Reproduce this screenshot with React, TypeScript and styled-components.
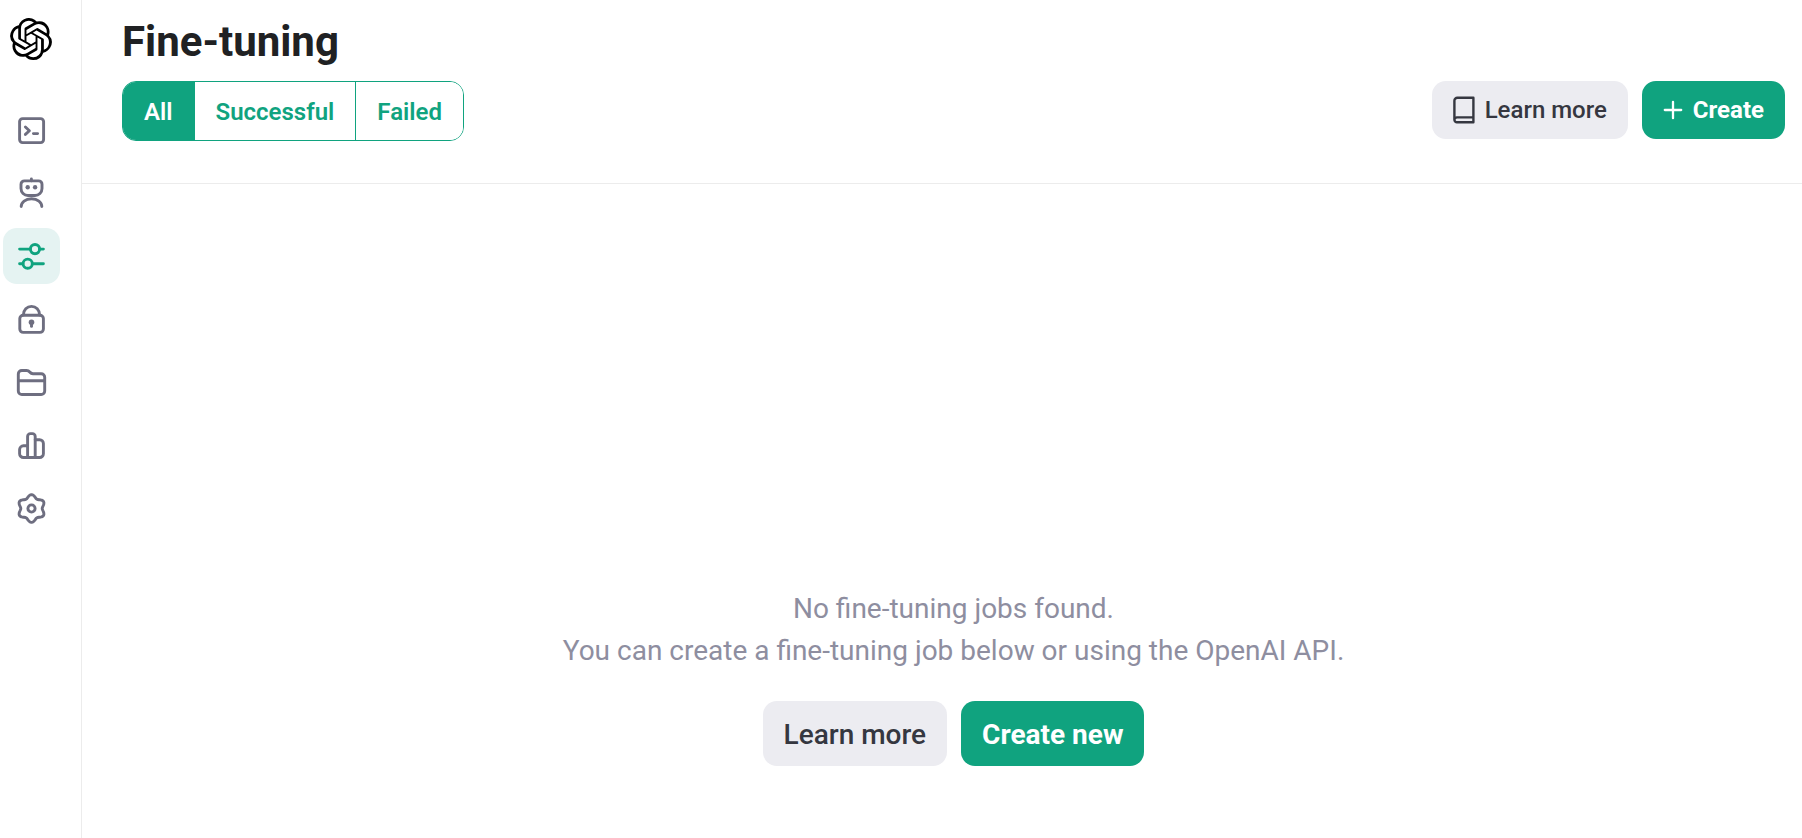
import React, { useState } from "react";
import styled, { createGlobalStyle, css } from "styled-components";
import { SiOpenai } from "react-icons/si";

const color = {
  green: "#10a37f",
  greenSoft: "#e5f3f2",
  grey: "#ececf1",
  ink: "#353740",
  title: "#202123",
  muted: "#8e8ea0",
  icon: "#6e6e80",
  line: "#ececec",
};

const GlobalStyle = createGlobalStyle`
  *, *::before, *::after { box-sizing: border-box; }
  body {
    margin: 0;
    background: #fff;
    color: ${color.ink};
    font-family: Roboto, "Liberation Sans", sans-serif;
  }
  button { font-family: inherit; cursor: pointer; }
`;

const Page = styled.div`
  display: flex;
  min-height: 100vh;
`;

const Sidebar = styled.aside`
  flex: none;
  display: flex;
  flex-direction: column;
  gap: 42px;
  width: 82px;
  padding: 18px 0 18px 3px;
  border-right: 1px solid ${color.line};
`;

const Logo = styled.a`
  display: flex;
  justify-content: center;
  width: 56px;
  color: #000;
`;

const Nav = styled.nav`
  display: flex;
  flex-direction: column;
  gap: 7px;
`;

const NavLink = styled.a<{ $active: boolean }>`
  display: flex;
  align-items: center;
  justify-content: center;
  width: 57px;
  height: 56px;
  border-radius: 14px;
  color: ${(p) => (p.$active ? color.green : color.icon)};
  background: ${(p) => (p.$active ? color.greenSoft : "transparent")};
`;

const Main = styled.main`
  flex: 1;
  min-width: 0;
`;

const Header = styled.header`
  display: flex;
  flex-direction: column;
  gap: 15px;
  padding: 18px 17px 42px 40px;
  border-bottom: 1px solid ${color.line};
`;

const Title = styled.h1`
  margin: 0;
  font-size: 42px;
  line-height: 48px;
  font-weight: 700;
  color: ${color.title};
`;

const Toolbar = styled.div`
  display: flex;
  flex-wrap: wrap;
  align-items: flex-start;
  justify-content: space-between;
  gap: 14px;
`;

const Segments = styled.div`
  display: flex;
  height: 60px;
  border: 1px solid ${color.green};
  border-radius: 14px;
  overflow: hidden;
`;

const Segment = styled.button<{ $active: boolean }>`
  padding: 2px 21px 0;
  border: 0;
  font-size: 24px;
  font-weight: 600;
  color: ${(p) => (p.$active ? "#fff" : color.green)};
  background: ${(p) => (p.$active ? color.green : "#fff")};

  & + & {
    border-left: 1px solid ${color.green};
  }
`;

const Actions = styled.div`
  display: flex;
  gap: 14px;
`;

const Button = styled.button<{ $primary?: boolean; $large?: boolean }>`
  display: flex;
  align-items: center;
  gap: 10px;
  border: 0;
  border-radius: 14px;
  ${(p) =>
    p.$large
      ? css`
          height: 65px;
          padding: 2px 21px 0;
          font-size: 28px;
        `
      : css`
          height: 58px;
          padding: 0 21px;
          font-size: 24px;
        `}
  font-weight: ${(p) => (p.$primary ? 700 : 500)};
  color: ${(p) => (p.$primary ? "#fff" : color.ink)};
  background: ${(p) => (p.$primary ? color.green : color.grey)};
`;

const Empty = styled.section`
  display: flex;
  flex-direction: column;
  align-items: center;
  gap: 29px;
  padding: 404px 17px 72px 40px;
`;

const Message = styled.p`
  margin: 0;
  font-size: 28px;
  line-height: 42px;
  text-align: center;
  color: ${color.muted};
`;

const NavIcon = ({ children }: { children: React.ReactNode }) => (
  <svg
    width="31"
    height="32"
    viewBox="0 0 31 32"
    fill="none"
    stroke="currentColor"
    strokeWidth="2.9"
    strokeLinecap="round"
    strokeLinejoin="round"
    aria-hidden="true"
  >
    {children}
  </svg>
);

const Playground = () => (
  <NavIcon>
    <rect x="3.6" y="4.6" width="24" height="24" rx="3" />
    <path d="M9.4 13l4 3.7-4 3.7M17.4 19.6h4.2" />
  </NavIcon>
);

const Assistant = () => (
  <NavIcon>
    <path d="M15.4 2v2M8.4 3.9h14.2a3.4 3.4 0 0 1 3.4 3.4v4.2a7 7 0 0 1-7 7h-7a7 7 0 0 1-7-7V7.3a3.4 3.4 0 0 1 3.4-3.4z" />
    <path d="M5.2 29.6c0-4.4 4.2-7.8 10.3-7.8s10.3 3.4 10.3 7.8" />
    <g fill="currentColor" stroke="none">
      <circle cx="11.7" cy="10.2" r="2.2" />
      <circle cx="19.1" cy="10.2" r="2.2" />
    </g>
  </NavIcon>
);

const Sliders = () => (
  <NavIcon>
    <path d="M3.6 9.1h10.6M23.6 9.1h3.8M3.6 23.7h3.2M16.4 23.7h11" />
    <circle cx="19" cy="9.1" r="4.6" />
    <circle cx="11.7" cy="23.7" r="4.6" />
  </NavIcon>
);

const Lock = () => (
  <NavIcon>
    <rect x="3.8" y="12.2" width="23.6" height="17.2" rx="3.4" />
    <path d="M7.4 12c0-5 3.6-8.6 8.1-8.6s8.1 3.6 8.1 8.6" />
    <circle cx="15.5" cy="19.3" r="2.8" fill="currentColor" stroke="none" />
    <path d="M15.5 20v3.4" />
  </NavIcon>
);

const Folder = () => (
  <NavIcon>
    <path d="M2.3 25V8a3.5 3.5 0 0 1 3.5-3.5h4.8c1.3 0 2.3.5 3.1 1.5 1 1.2 1.9 1.7 3.3 1.7h8.2a3.5 3.5 0 0 1 3.5 3.5V25a3.5 3.5 0 0 1-3.5 3.5H5.8A3.5 3.5 0 0 1 2.3 25zM2.3 14.7h26.4" />
  </NavIcon>
);

const Usage = () => (
  <NavIcon>
    <path d="M11.6 28.5V7.4a2.8 2.8 0 0 1 2.8-2.8h2a2.8 2.8 0 0 1 2.8 2.8v21.1" />
    <path d="M11.6 16.8H7.4a3.8 3.8 0 0 0-3.8 3.8v4.1a3.8 3.8 0 0 0 3.8 3.8h16.2a3.8 3.8 0 0 0 3.8-3.8V14.5a3.8 3.8 0 0 0-3.8-3.8h-4.4" />
  </NavIcon>
);

// Six soft lobes around the centre, the first one pointing straight up.
const gearOutline =
  Array.from({ length: 72 }, (_, i) => {
    const a = (i / 72) * Math.PI * 2;
    const r = 12.3 + 1.6 * Math.cos(a * 6);
    const x = (15.5 + r * Math.sin(a)).toFixed(2);
    const y = (16.5 - r * Math.cos(a)).toFixed(2);
    return `${i ? "L" : "M"}${x} ${y}`;
  }).join("") + "z";

const Gear = () => (
  <NavIcon>
    <path d={gearOutline} />
    <circle cx="15.5" cy="16.5" r="3.6" />
  </NavIcon>
);

const Book = () => (
  <svg width="22" height="28" viewBox="0 0 22 28" fill="none" stroke="currentColor" strokeWidth="2.4" strokeLinejoin="round" aria-hidden="true">
    <path d="M20.4 21.4V1.8H4.4a3 3 0 0 0-3 3v18.8M20.4 21.4v4.8H4a2.5 2.5 0 0 1-2.6-2.4A2.5 2.5 0 0 1 4 21.4z" />
  </svg>
);

const Plus = () => (
  <svg width="20" height="20" viewBox="0 0 20 20" fill="none" stroke="currentColor" strokeWidth="2.3" strokeLinecap="round" aria-hidden="true">
    <path d="M10 1.8v16.4M1.8 10h16.4" />
  </svg>
);

const navItems = [
  { label: "Playground", icon: Playground },
  { label: "Assistants", icon: Assistant },
  { label: "Fine-tuning", icon: Sliders },
  { label: "API keys", icon: Lock },
  { label: "Files", icon: Folder },
  { label: "Usage", icon: Usage },
  { label: "Settings", icon: Gear },
];

const filters = ["All", "Successful", "Failed"];

export default function App() {
  const [filter, setFilter] = useState("All");

  return (
    <Page>
      <GlobalStyle />
      <Sidebar>
        <Logo href="#" aria-label="OpenAI">
          <SiOpenai size={42} />
        </Logo>
        <Nav aria-label="Main">
          {navItems.map(({ label, icon: Icon }) => (
            <NavLink key={label} href="#" aria-label={label} $active={label === "Fine-tuning"}>
              <Icon />
            </NavLink>
          ))}
        </Nav>
      </Sidebar>
      <Main>
        <Header>
          <Title>Fine-tuning</Title>
          <Toolbar>
            <Segments role="group" aria-label="Job status">
              {filters.map((name) => (
                <Segment
                  key={name}
                  type="button"
                  aria-pressed={filter === name}
                  $active={filter === name}
                  onClick={() => setFilter(name)}
                >
                  {name}
                </Segment>
              ))}
            </Segments>
            <Actions>
              <Button type="button">
                <Book />
                Learn more
              </Button>
              <Button type="button" $primary>
                <Plus />
                Create
              </Button>
            </Actions>
          </Toolbar>
        </Header>
        <Empty>
          <Message>
            No fine-tuning jobs found.
            <br />
            You can create a fine-tuning job below or using the OpenAI API.
          </Message>
          <Actions>
            <Button type="button" $large>
              Learn more
            </Button>
            <Button type="button" $large $primary>
              Create new
            </Button>
          </Actions>
        </Empty>
      </Main>
    </Page>
  );
}
